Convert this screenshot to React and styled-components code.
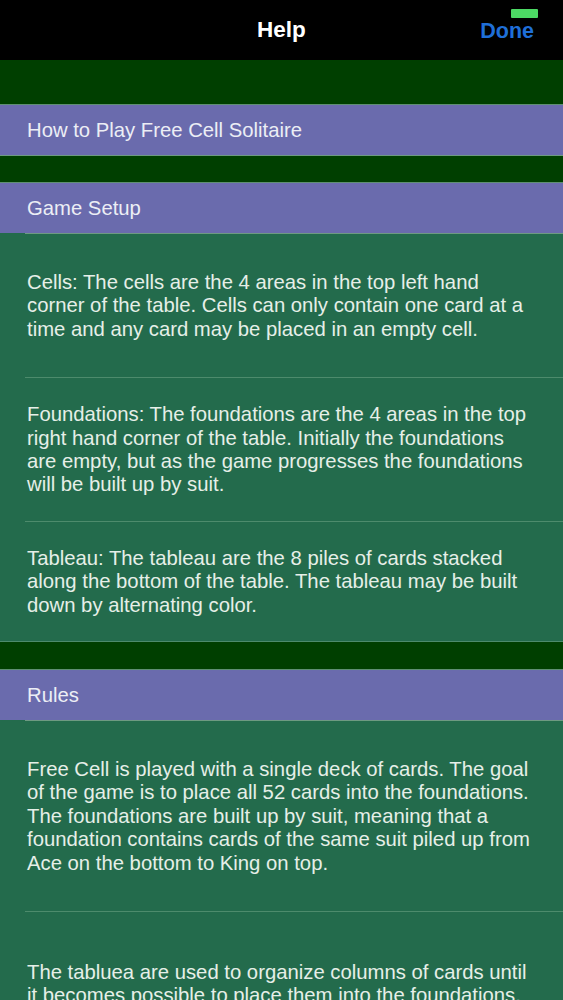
import React from "react";
import styled, { createGlobalStyle } from "styled-components";

const Global = createGlobalStyle`
  html, body { margin: 0; padding: 0; background: #236b4c; }
  body { font-family: "Liberation Sans", Arial, Helvetica, sans-serif; -webkit-font-smoothing: antialiased; }
  #root { width: 563px; overflow: hidden; }
`;

const Screen = styled.div`
  display: flex;
  flex-direction: column;
  width: 563px;
  min-height: 1000px;
  background: #236b4c;
`;

const NavBar = styled.header`
  position: relative;
  height: 60px;
  background: #000;
  display: flex;
  align-items: center;
  justify-content: center;
`;

const NavTitle = styled.h1`
  margin: 0;
  color: #fff;
  font-size: 22.5px;
  font-weight: 700;
  line-height: 1;
`;

const DoneButton = styled.button`
  position: absolute;
  right: 29px;
  top: 50%;
  transform: translateY(calc(-50% + 2px));
  background: none;
  border: 0;
  padding: 0;
  color: #1f6fd8;
  font-family: inherit;
  font-size: 21.5px;
  font-weight: 700;
  line-height: 1;
  cursor: pointer;
`;

const Battery = styled.span`
  position: absolute;
  left: 511px;
  top: 9px;
  width: 27px;
  height: 9px;
  border-radius: 1px;
  background: #4cd964;
`;

const Spacer = styled.div`
  height: ${(p) => p.$h}px;
  background: #003f00;
`;

const SectionHeader = styled.div`
  position: relative;
  height: 50px;
  display: flex;
  align-items: center;
  padding-left: 27px;
  background: #6a6bad;
  color: #eceef5;
  font-size: 20.3px;
  border-top: 1px solid #5f8f73;
  &::after {
    content: "";
    position: absolute;
    left: ${(p) => (p.$inset ? "25px" : "0")};
    right: 0;
    bottom: -1px;
    height: 1px;
    background: #6e9a82;
  }
`;

const Rows = styled.div`
  display: flex;
  flex-direction: column;
  background: #236b4c;
  margin-top: 1px;
`;

const Row = styled.div`
  position: relative;
  min-height: ${(p) => p.$h}px;
  display: flex;
  align-items: ${(p) => (p.$open ? "flex-start" : "center")};
  padding: ${(p) => (p.$open ? "49px" : "0")} 26px 0 27px;
  box-sizing: border-box;
  &::after {
    content: "";
    display: ${(p) => (p.$open ? "none" : "block")};
    position: absolute;
    left: ${(p) => (p.$last ? "0" : "25px")};
    right: 0;
    bottom: 0;
    height: 1px;
    background: #4d8b6c;
  }
`;

const Body = styled.p`
  margin: 0;
  color: #e6efe8;
  font-size: 20.3px;
  line-height: 23.4px;
`;

export default function App() {
  return (
    <>
      <Global />
      <Screen>
        <NavBar>
          <NavTitle>Help</NavTitle>
          <DoneButton>Done</DoneButton>
          <Battery />
        </NavBar>

        <Spacer $h={44} />
        <SectionHeader>How to Play Free Cell Solitaire</SectionHeader>

        <Spacer $h={27} />
        <SectionHeader $inset>Game Setup</SectionHeader>
        <Rows>
          <Row $h={144}>
            <Body>
              Cells: The cells are the 4 areas in the top left hand corner of the table. Cells can only contain one card at a time and any card may be placed in an empty cell.
            </Body>
          </Row>
          <Row $h={144}>
            <Body>
              Foundations: The foundations are the 4 areas in the top right hand corner of the table. Initially the foundations are empty, but as the game progresses the foundations will be built up by suit.
            </Body>
          </Row>
          <Row $h={120} $last>
            <Body>
              Tableau: The tableau are the 8 piles of cards stacked along the bottom of the table. The tableau may be built down by alternating color.
            </Body>
          </Row>
        </Rows>

        <Spacer $h={27} />
        <SectionHeader $inset>Rules</SectionHeader>
        <Rows>
          <Row $h={191}>
            <Body>
              Free Cell is played with a single deck of cards. The goal of the game is to place all 52 cards into the foundations. The foundations are built up by suit, meaning that a foundation contains cards of the same suit piled up from Ace on the bottom to King on top.
            </Body>
          </Row>
          <Row $h={200} $open>
            <Body>
              The tabluea are used to organize columns of cards until it becomes possible to place them into the foundations. Cards may be moved between the tableau piles and the cells.
            </Body>
          </Row>
        </Rows>
      </Screen>
    </>
  );
}
